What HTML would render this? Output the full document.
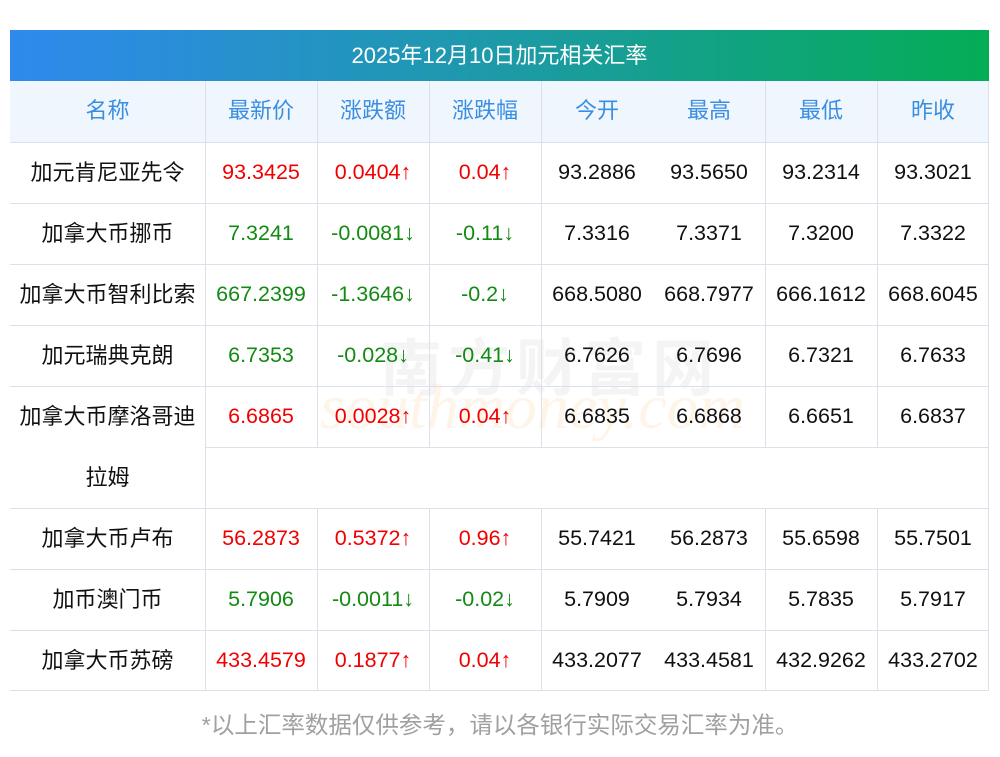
<!DOCTYPE html><html><head><meta charset="utf-8"><style>
body{margin:0;width:1000px;height:757px;background:#fff;font-family:"Liberation Sans","Noto Sans CJK SC",sans-serif;position:relative;overflow:hidden}
.t{position:absolute;left:10px;top:30px;width:979px;height:51px;background:linear-gradient(90deg,#2f89ee,#1d9aa8 50%,#04ad55);color:#fff;font-size:22px;line-height:51px;text-align:center}
.hd{position:absolute;left:10px;top:81px;width:979px;height:61px;background:#f0f6fe}
.h{position:absolute;background:#dde0ea;height:1px}
.v{position:absolute;background:#dde0ea;width:1px}
.c{position:absolute;width:112px;text-align:center;font-size:21.5px;line-height:61px;color:#111}
.n{position:absolute;left:10px;width:195px;text-align:center;font-size:22px;line-height:61px;color:#111}
.hc{color:#3a8ee0 !important;font-size:22px}
.r{color:#f10000}.g{color:#138a13}
.wm{position:absolute;color:rgba(245,180,90,.14);font-weight:bold}
</style></head><body>
<div class="t">2025年12月10日加元相关汇率</div>
<div class="hd"></div>
<div class="wm" style="left:380px;top:318px;font-size:62px;letter-spacing:6px;color:rgba(150,150,150,.10)">南方财富网</div>
<div class="wm" style="left:320px;top:370px;font-size:64px;font-style:italic;font-family:'Liberation Serif',serif;font-weight:normal">southmoney.com</div>
<div id="g"></div>
<div style="position:absolute;left:0;top:705px;width:1000px;text-align:center;font-size:23.5px;color:#a0a0a0;line-height:40px">*以上汇率数据仅供参考，请以各银行实际交易汇率为准。</div>
<script>
var X=[205,317,429,541,653,765,877];
var rows=[
["加元肯尼亚先令","93.3425","0.0404↑","0.04↑","93.2886","93.5650","93.2314","93.3021","r"],
["加拿大币挪币","7.3241","-0.0081↓","-0.11↓","7.3316","7.3371","7.3200","7.3322","g"],
["加拿大币智利比索","667.2399","-1.3646↓","-0.2↓","668.5080","668.7977","666.1612","668.6045","g"],
["加元瑞典克朗","6.7353","-0.028↓","-0.41↓","6.7626","6.7696","6.7321","6.7633","g"],
["加拿大币摩洛哥迪","6.6865","0.0028↑","0.04↑","6.6835","6.6868","6.6651","6.6837","r"],
["加拿大币卢布","56.2873","0.5372↑","0.96↑","55.7421","56.2873","55.6598","55.7501","r"],
["加币澳门币","5.7906","-0.0011↓","-0.02↓","5.7909","5.7934","5.7835","5.7917","g"],
["加拿大币苏磅","433.4579","0.1877↑","0.04↑","433.2077","433.4581","432.9262","433.2702","r"]];
var h='';
var hds=["最新价","涨跌额","涨跌幅","今开","最高","最低","昨收"];
h+='<div class="n hc" style="top:80px">名称</div>';
hds.forEach(function(s,i){h+='<div class="c hc" style="left:'+X[i]+'px;top:80px">'+s+'</div>'});
var tops=[142,203,264,325,386,508,569,630];
rows.forEach(function(r,k){var t=tops[k];
h+='<div class="n" style="top:'+t+'px">'+r[0]+'</div>';
for(var i=1;i<8;i++){h+='<div class="c '+(i<4?r[8]:'')+'" style="left:'+X[i-1]+'px;top:'+t+'px">'+r[i]+'</div>'}
h+='<div class="h" style="left:10px;width:979px;top:'+(t)+'px"></div>';
});
h+='<div class="n" style="top:447px">拉姆</div>';
h+='<div class="h" style="left:205px;width:784px;top:447px"></div>';
h+='<div class="h" style="left:10px;width:979px;top:508px"></div>';
h+='<div class="h" style="left:10px;width:979px;top:690px"></div>';
[205,988].forEach(function(x){h+='<div class="v" style="left:'+x+'px;top:81px;height:610px"></div>'});
[317,429,541,765,877].forEach(function(x){h+='<div class="v" style="left:'+x+'px;top:81px;height:366px"></div><div class="v" style="left:'+x+'px;top:508px;height:183px"></div>'});
document.getElementById('g').innerHTML=h;
</script>
</body></html>
